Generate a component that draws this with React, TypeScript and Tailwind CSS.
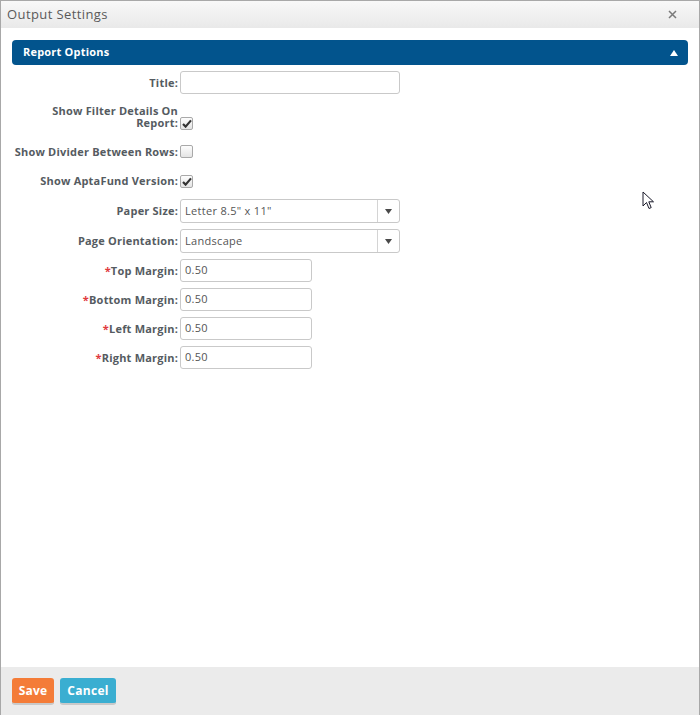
import React from "react";

const labelCls =
  "text-right pr-[2px] text-[11px] font-bold tracking-[0.2px] text-[#555b61] leading-[12px]";

function Check({ checked }: { checked?: boolean }) {
  return (
    <span className="inline-flex h-[13px] w-[13px] items-center justify-center rounded-[2px] border border-[#a9a9a9] bg-gradient-to-b from-[#fdfdfd] to-[#e4e4e4]">
      {checked && (
        <svg width="10" height="9" viewBox="0 0 10 9">
          <path d="M1 5 L3.6 7.6 L9 1.4" fill="none" stroke="#333" strokeWidth="2.2" />
        </svg>
      )}
    </span>
  );
}

function Row({ label, required, children, h = "h-[23px]" }: { label: string; required?: boolean; children: React.ReactNode; h?: string }) {
  return (
    <div className={`grid grid-cols-[179px_1fr] items-center ${h}`}>
      <div className={labelCls}>
        {required && <span className="text-[#e0393e]">*</span>}
        {label}
      </div>
      <div className="flex items-center">{children}</div>
    </div>
  );
}

function TextBox({ value, w }: { value?: string; w: string }) {
  return (
    <div className={`${w} h-[23px] rounded-[3px] border border-[#c9c9c9] bg-white pl-[4px] flex items-center text-[11px] tracking-[0.3px] text-[#555]`}>
      {value}
    </div>
  );
}

function Select({ value }: { value: string }) {
  return (
    <div className="w-[220px] h-[24px] rounded-[3px] border border-[#c9c9c9] bg-white flex items-stretch text-[11px] tracking-[0.3px] text-[#555]">
      <div className="flex-1 flex items-center pl-[4px]">{value}</div>
      <div className="w-[22px] border-l border-[#d4d4d4] flex items-center justify-center">
        <svg width="7" height="5" viewBox="0 0 7 5">
          <path d="M0 0 H7 L3.5 5 Z" fill="#4a4a4a" />
        </svg>
      </div>
    </div>
  );
}

export default function App() {
  return (
    <div
      className="relative h-[715px] w-[700px] flex flex-col bg-white border-x border-t border-[#a8a8a8] overflow-hidden"
      style={{ fontFamily: '"Open Sans", "Noto Sans", sans-serif' }}
    >
      <div className="h-[27px] shrink-0 flex items-center justify-between pl-[6px] pr-[22px] bg-gradient-to-b from-[#f8f8f8] to-[#e9e9e9]">
        <span className="text-[13px] tracking-[0.4px] text-[#5a5a5a]">Output Settings</span>
        <svg width="9" height="9" viewBox="0 0 9 9">
          <path d="M1 1 L8 8 M8 1 L1 8" stroke="#7a7a7a" strokeWidth="1.5" />
        </svg>
      </div>

      <div className="flex-1 px-[11px] pt-[12px]">
        <div className="h-[25px] rounded-[4px] bg-[#02548d] flex items-center justify-between pl-[11px] pr-[10px]">
          <span className="text-[11px] font-bold tracking-[0.2px] text-white">Report Options</span>
          <svg width="8" height="6" viewBox="0 0 8 6">
            <path d="M0 6 H8 L4 0 Z" fill="#fff" />
          </svg>
        </div>

        <div className="-ml-[11px] mt-[6px] flex flex-col gap-[6px]">
          <Row label="Title:">
            <TextBox w="w-[220px]" />
          </Row>
          <div className="grid grid-cols-[179px_1fr] h-[34px]">
            <div className={`${labelCls} pt-[5px] pl-[40px]`}>Show Filter Details On Report:</div>
            <div className="flex items-start pt-[17px]">
              <Check checked />
            </div>
          </div>
          <Row label="Show Divider Between Rows:">
            <Check />
          </Row>
          <Row label="Show AptaFund Version:" h="h-[24px]">
            <Check checked />
          </Row>
          <Row label="Paper Size:" h="h-[24px]">
            <Select value={'Letter 8.5" x 11"'} />
          </Row>
          <Row label="Page Orientation:" h="h-[24px]">
            <Select value="Landscape" />
          </Row>
          <Row label="Top Margin:" required>
            <TextBox w="w-[132px]" value="0.50" />
          </Row>
          <Row label="Bottom Margin:" required>
            <TextBox w="w-[132px]" value="0.50" />
          </Row>
          <Row label="Left Margin:" required>
            <TextBox w="w-[132px]" value="0.50" />
          </Row>
          <Row label="Right Margin:" required>
            <TextBox w="w-[132px]" value="0.50" />
          </Row>
        </div>
      </div>

      <div className="h-[48px] shrink-0 bg-[#ebebeb] flex items-start gap-[6px] pl-[11px] pt-[11px]">
        <button className="h-[27px] w-[42px] rounded-[3px] bg-[#f47c38] border-b-2 border-[#c9c9c9] text-[12px] font-bold tracking-[0.2px] text-white">
          Save
        </button>
        <button className="h-[27px] w-[56px] rounded-[3px] bg-[#3aaed1] border-b-2 border-[#c9c9c9] text-[12px] font-bold tracking-[0.3px] text-white">
          Cancel
        </button>
      </div>

      <svg className="absolute left-[641px] top-[190px]" width="14" height="20" viewBox="0 0 14 20">
        <path
          d="M1 1 V15 L4.5 11.5 L7 17.5 L9.2 16.6 L6.8 10.8 H11.5 Z"
          fill="#fff"
          stroke="#1a1a2a"
          strokeWidth="1"
          strokeLinejoin="round"
        />
      </svg>
    </div>
  );
}
